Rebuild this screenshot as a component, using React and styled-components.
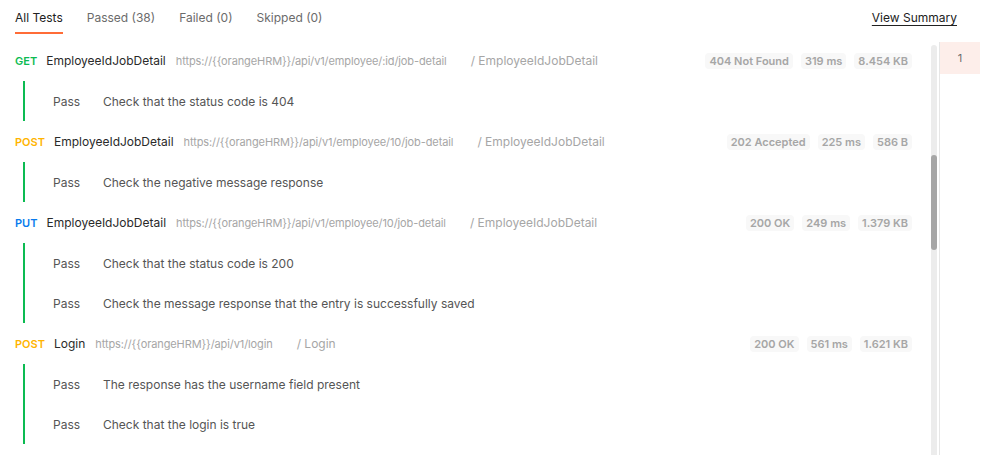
import React from "react";
import styled, { createGlobalStyle } from "styled-components";

const Global = createGlobalStyle`
  html, body { margin: 0; padding: 0; background: #fff; }
  body { font-family: Inter, "Noto Sans", sans-serif; color: #212121; }
  * { box-sizing: border-box; }
`;

const Page = styled.div`
  width: 987px;
  height: 455px;
  overflow: hidden;
  display: flex;
  flex-direction: column;
  background: #fff;
`;

const TopBar = styled.div`
  height: 40px;
  display: flex;
  align-items: flex-start;
  padding: 0 30px 0 15px;
  flex-shrink: 0;
`;

const Tabs = styled.div`
  display: flex;
  gap: 24px;
  flex: 1;
`;

const Tab = styled.div`
  font-size: 12px;
  line-height: 1;
  color: ${(p) => (p.$active ? "#212121" : "#6b6b6b")};
  padding-top: 12px;
  height: 34px;
  border-bottom: 2px solid ${(p) => (p.$active ? "#ff6c37" : "transparent")};
`;

const SummaryLink = styled.a`
  font-size: 12px;
  color: #212121;
  text-decoration: underline;
  text-underline-offset: 3px;
  padding-top: 12px;
  line-height: 1;
  cursor: pointer;
`;

const Body = styled.div`
  flex: 1;
  display: flex;
  min-height: 0;
`;

const List = styled.div`
  width: 931px;
  padding: 0 19px 0 15px;
  display: flex;
  flex-direction: column;
`;

const Group = styled.div`
  display: flex;
  flex-direction: column;
`;

const Header = styled.div`
  height: 41px;
  display: flex;
  align-items: center;
`;

const Method = styled.span`
  font-size: 11px;
  font-weight: 600;
  color: ${(p) => p.$color};
  margin-right: 9px;
`;

const Name = styled.span`
  font-size: 12px;
  color: #2a2a2a;
  margin-right: 10px;
`;

const Url = styled.span`
  font-size: 11px;
  color: #a6a6a6;
  letter-spacing: -0.1px;
  margin-right: 24px;
`;

const Folder = styled.span`
  font-size: 12px;
  color: #a6a6a6;
  flex: 1;
`;

const Badges = styled.div`
  display: flex;
  gap: 8px;
`;

const Badge = styled.span`
  height: 16px;
  padding: 0 4px;
  border-radius: 4px;
  background: #f8f8f8;
  color: #a6a6a6;
  font-size: 11px;
  font-weight: 600;
  display: flex;
  align-items: center;
`;

const Tests = styled.div`
  margin: 0 0 0 8px;
  border-left: 2px solid #0cbb52;
  display: flex;
  flex-direction: column;
`;

const TestRow = styled.div`
  height: 40px;
  display: flex;
  align-items: center;
  padding-left: 28px;
  padding-top: 1px;
  font-size: 12px;
  color: #555;
`;

const Status = styled.span`
  width: 50px;
`;

const ScrollTrack = styled.div`
  width: 6px;
  margin-top: 5px;
  background: #ececec;
  border-radius: 3px 3px 0 0;
  position: relative;
  flex-shrink: 0;
`;

const ScrollThumb = styled.div`
  position: absolute;
  left: 0;
  right: 0;
  top: 110px;
  height: 95px;
  border-radius: 3px;
  background: #a6a6a6;
`;

const Divider = styled.div`
  width: 1px;
  margin-left: 2px;
  margin-top: 2px;
  background: #e6e6e6;
  flex-shrink: 0;
`;

const Side = styled.div`
  flex: 1;
  display: flex;
  flex-direction: column;
  padding-top: 2px;
`;

const IterCell = styled.div`
  width: 40px;
  height: 32px;
  background: #fdeeea;
  font-size: 11px;
  color: #6b6b6b;
  display: flex;
  align-items: center;
  justify-content: center;
`;

const methodColors = { GET: "#0cbb52", POST: "#ffb400", PUT: "#097bed" };

const groups = [
  {
    method: "GET",
    name: "EmployeeIdJobDetail",
    url: "https://{{orangeHRM}}/api/v1/employee/:id/job-detail",
    folder: "/ EmployeeIdJobDetail",
    badges: ["404 Not Found", "319 ms", "8.454 KB"],
    tests: ["Check that the status code is 404"],
  },
  {
    method: "POST",
    name: "EmployeeIdJobDetail",
    url: "https://{{orangeHRM}}/api/v1/employee/10/job-detail",
    folder: "/ EmployeeIdJobDetail",
    badges: ["202 Accepted", "225 ms", "586 B"],
    tests: ["Check the negative message response"],
  },
  {
    method: "PUT",
    name: "EmployeeIdJobDetail",
    url: "https://{{orangeHRM}}/api/v1/employee/10/job-detail",
    folder: "/ EmployeeIdJobDetail",
    badges: ["200 OK", "249 ms", "1.379 KB"],
    tests: [
      "Check that the status code is 200",
      "Check the message response that the entry is successfully saved",
    ],
  },
  {
    method: "POST",
    name: "Login",
    url: "https://{{orangeHRM}}/api/v1/login",
    folder: "/ Login",
    badges: ["200 OK", "561 ms", "1.621 KB"],
    tests: [
      "The response has the username field present",
      "Check that the login is true",
    ],
  },
];

export default function App() {
  return (
    <>
      <Global />
      <Page>
        <TopBar>
          <Tabs>
            <Tab $active>All Tests</Tab>
            <Tab>Passed (38)</Tab>
            <Tab>Failed (0)</Tab>
            <Tab>Skipped (0)</Tab>
          </Tabs>
          <SummaryLink>View Summary</SummaryLink>
        </TopBar>
        <Body>
          <List>
            {groups.map((g, i) => (
              <Group key={i}>
                <Header>
                  <Method $color={methodColors[g.method]}>{g.method}</Method>
                  <Name>{g.name}</Name>
                  <Url>{g.url}</Url>
                  <Folder>{g.folder}</Folder>
                  <Badges>
                    {g.badges.map((b) => (
                      <Badge key={b}>{b}</Badge>
                    ))}
                  </Badges>
                </Header>
                <Tests>
                  {g.tests.map((t) => (
                    <TestRow key={t}>
                      <Status>Pass</Status>
                      {t}
                    </TestRow>
                  ))}
                </Tests>
              </Group>
            ))}
          </List>
          <ScrollTrack>
            <ScrollThumb />
          </ScrollTrack>
          <Divider />
          <Side>
            <IterCell>1</IterCell>
          </Side>
        </Body>
      </Page>
    </>
  );
}
